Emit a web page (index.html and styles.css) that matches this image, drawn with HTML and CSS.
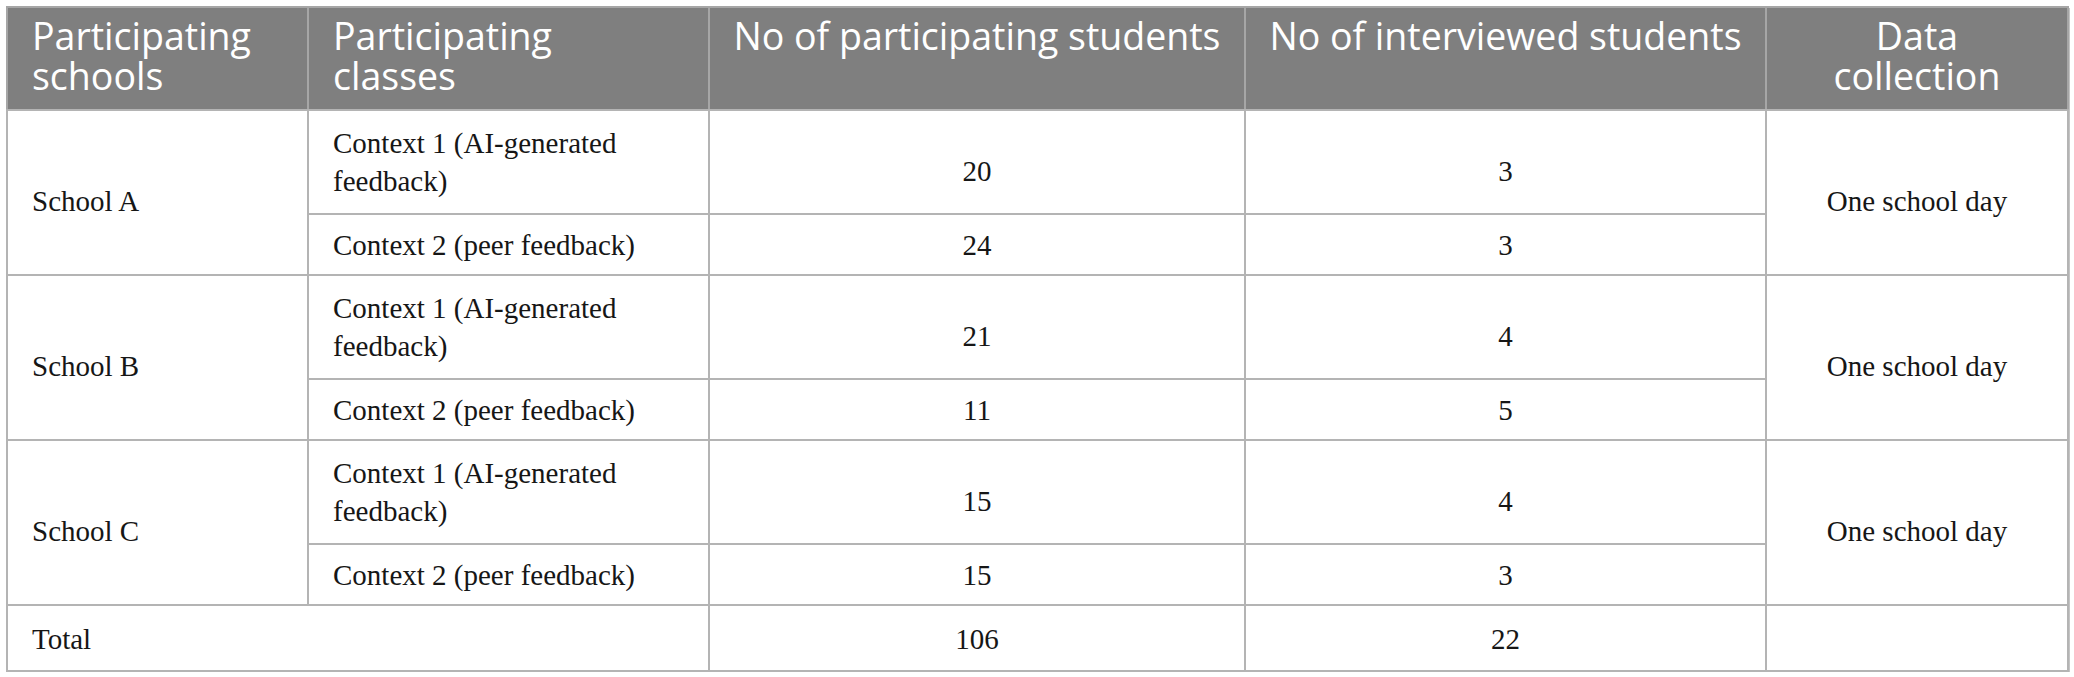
FILE: index.html
```html
<!DOCTYPE html>
<html>
<head>
<meta charset="utf-8">
<link rel="stylesheet" href="styles.css">
</head>
<body>
<table class="data">
  <colgroup>
    <col class="c1"><col class="c2"><col class="c3"><col class="c4"><col class="c5">
  </colgroup>
  <thead>
    <tr class="head">
      <th class="left">Participating schools</th>
      <th class="left">Participating classes</th>
      <th>No of participating students</th>
      <th>No of interviewed students</th>
      <th class="narrow">Data collection</th>
    </tr>
  </thead>
  <tbody>
    <tr class="tall">
      <td rowspan="2" class="left span">School A</td>
      <td class="left">Context 1 (AI-generated feedback)</td>
      <td class="low">20</td>
      <td class="low">3</td>
      <td rowspan="2" class="span">One school day</td>
    </tr>
    <tr class="short">
      <td class="left">Context 2 (peer feedback)</td>
      <td>24</td>
      <td>3</td>
    </tr>
    <tr class="tall">
      <td rowspan="2" class="left span">School B</td>
      <td class="left">Context 1 (AI-generated feedback)</td>
      <td class="low">21</td>
      <td class="low">4</td>
      <td rowspan="2" class="span">One school day</td>
    </tr>
    <tr class="short">
      <td class="left">Context 2 (peer feedback)</td>
      <td>11</td>
      <td>5</td>
    </tr>
    <tr class="tall">
      <td rowspan="2" class="left span">School C</td>
      <td class="left">Context 1 (AI-generated feedback)</td>
      <td class="low">15</td>
      <td class="low">4</td>
      <td rowspan="2" class="span">One school day</td>
    </tr>
    <tr class="short">
      <td class="left">Context 2 (peer feedback)</td>
      <td>15</td>
      <td>3</td>
    </tr>
    <tr class="short total">
      <td colspan="2" class="left">Total</td>
      <td>106</td>
      <td>22</td>
      <td></td>
    </tr>
  </tbody>
</table>
</body>
</html>
```

FILE: styles.css
```css
html, body {
  margin: 0;
  padding: 0;
  background: #ffffff;
}

body {
  padding: 6px 0 0 6px;
}

.data {
  border-collapse: collapse;
  table-layout: fixed;
  width: 2061px;
  border: 2px solid #a8a8a8;
  box-shadow: 1px 2px 0 #c4c4c4;
}

.c1 { width: 301px; }
.c2 { width: 401px; }
.c3 { width: 536px; }
.c4 { width: 521px; }
.c5 { width: 302px; }

.head th {
  background: #7f7f7f;
  color: #ffffff;
  font-family: "Open Sans", "Noto Sans", sans-serif;
  font-weight: 400;
  font-size: 37.5px;
  line-height: 40px;
  text-align: center;
  vertical-align: top;
  padding: 8px 20px 8px 20px;
  height: 85px;
  border: 2px solid #a6a6a6;
  border-bottom-color: #b4b4b4;
}

.head th.left {
  text-align: left;
  padding-left: 24px;
  padding-right: 40px;
}

.head th.narrow {
  padding-left: 50px;
  padding-right: 50px;
}

td {
  font-family: "Liberation Serif", "Times New Roman", serif;
  font-size: 29px;
  line-height: 38px;
  color: #161616;
  text-align: center;
  vertical-align: middle;
  padding: 0 24px;
  border: 2px solid #b4b4b4;
}

td.left {
  text-align: left;
}

.tall td {
  height: 102px;
}

.tall td.low {
  height: 85px;
  padding-top: 17px;
}

.tall td.span {
  height: auto;
  padding-top: 17px;
}

.short td {
  height: 59px;
}

.total td {
  height: 62px;
  padding-top: 2px;
}
```
